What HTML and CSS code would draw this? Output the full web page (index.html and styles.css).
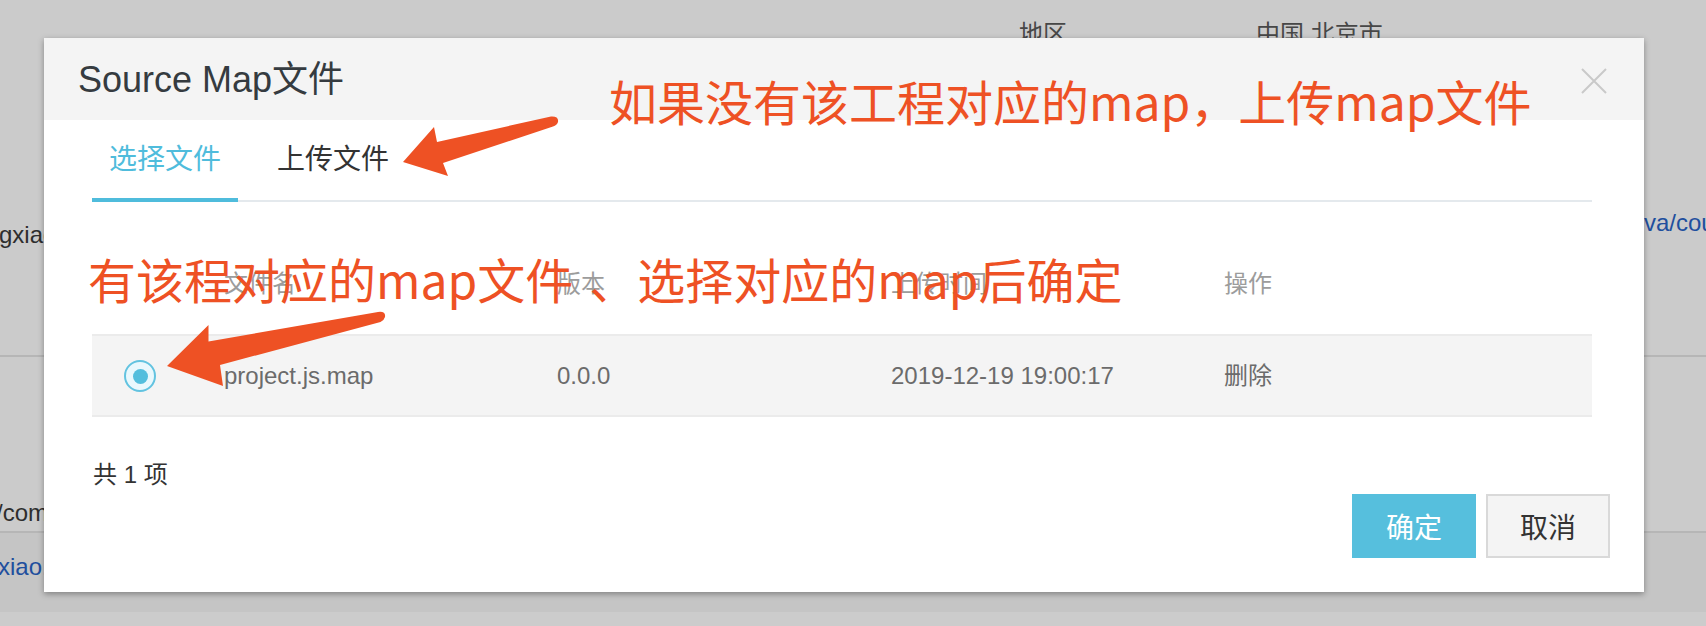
FILE: index.html
```html
<!DOCTYPE html>
<html lang="zh-CN">
<head>
<meta charset="utf-8">
<title>Source Map文件</title>
<link rel="stylesheet" href="styles.css">
</head>
<body>
<div class="page">
  <div class="bg-row bg-row-1">
    <div class="kv">
      <span class="kv-key">地区</span>
      <span class="kv-val">中国 北京市</span>
    </div>
    <div class="bg-cells">
      <span class="bg-cell-left"><span class="bg-text cut-left">gxiao</span></span>
      <span class="bg-link">va/course</span>
    </div>
  </div>
  <div class="bg-row bg-row-2">
    <span class="bg-text cut-left2">/com</span>
  </div>
  <div class="bg-row bg-row-3">
    <span class="bg-link cut-left3">xiao.com</span>
  </div>
  <div class="bg-row bg-row-4"></div>

  <div class="modal">
    <div class="modal-header">
      <h2 class="modal-title">Source Map文件</h2>
      <button class="close" aria-label="关闭">
        <svg width="26" height="26" viewBox="0 0 26 26"><path d="M1 1 L25 25 M25 1 L1 25" stroke="#c9c9c9" stroke-width="2" fill="none"/></svg>
      </button>
    </div>
    <div class="modal-body">
      <div class="tabs">
        <div class="tab active">选择文件</div>
        <div class="tab">上传文件</div>
      </div>
      <div class="table">
        <div class="row thead">
          <div class="cell cell-sel"></div>
          <div class="cell">文件名</div>
          <div class="cell">版本</div>
          <div class="cell">上传时间</div>
          <div class="cell">操作</div>
        </div>
        <div class="row tbody selected">
          <div class="cell cell-sel"><span class="radio"><span class="radio-dot"></span></span></div>
          <div class="cell">project.js.map</div>
          <div class="cell">0.0.0</div>
          <div class="cell">2019-12-19 19:00:17</div>
          <div class="cell">删除</div>
        </div>
      </div>
      <div class="total">共 1 项</div>
    </div>
    <div class="modal-footer">
      <button class="btn btn-primary">确定</button>
      <button class="btn btn-default">取消</button>
    </div>
  </div>

  <div class="annotations">
    <svg class="arrows" width="1706" height="626" viewBox="0 0 1706 626">
      <path fill="#ee5124" d="M403 162 L434 127 L437 142 L551 116.5 Q559 116 558 122 Q557 125 553 126.5 L443 163 L448 176 Z"/>
      <path fill="#ee5124" d="M167 366 L208.5 325 L208.5 341.5 L378 312 Q386 311 385 317 Q384 320.5 380.5 322 L220 365 L223 386 Z"/>
    </svg>
    <div class="note note-1">如果没有该工程对应的map，上传map文件</div>
    <div class="note note-2">有该程对应的map文件<span class="note-gap">、</span>选择对应的map后确定</div>
  </div>
</div>
</body>
</html>
```

FILE: styles.css
```css
* { box-sizing: border-box; }

html, body {
  margin: 0;
  padding: 0;
}

body {
  width: 1706px;
  height: 626px;
  overflow: hidden;
  background: #cbcbcb;
  font-family: "Liberation Sans", "Noto Sans CJK SC", sans-serif;
}

.page {
  position: relative;
  width: 1706px;
  height: 626px;
  overflow: hidden;
}

/* ---------- dimmed page behind the dialog ---------- */
.bg-row {
  font-size: 24px;
  line-height: 32px;
  color: #2e2e2e;
}

.bg-row-1 {
  height: 357px;
  border-bottom: 2px solid #b6b6b6;
  padding-top: 18px;
}

.kv {
  display: flex;
  padding-left: 1019px;
  color: #474747;
}

.kv-val {
  margin-left: 189px;
}

.bg-cells {
  display: flex;
  align-items: flex-start;
  margin-top: 157px;
  white-space: nowrap;
}

.bg-cell-left {
  flex: 0 0 1644px;
  overflow: hidden;
}

.bg-text { color: #2e2e2e; }
.bg-link { color: #1f4f9e; }

.cut-left { display: inline-block; margin-top: 12px; margin-left: -1px; }

.bg-row-2 {
  height: 176px;
  border-bottom: 2px solid #b6b6b6;
  padding-top: 140px;
}

.cut-left2 { margin-left: -4px; }

.bg-row-3 {
  height: 79px;
  background: #c5c5c5;
  padding-top: 18px;
}

.cut-left3 { margin-left: -2px; }

.bg-row-4 {
  height: 14px;
  background: #cccccc;
}

/* ---------- dialog ---------- */
.modal {
  position: absolute;
  left: 44px;
  top: 38px;
  width: 1600px;
  height: 554px;
  background: #ffffff;
  box-shadow: 0 2px 6px rgba(0, 0, 0, 0.35);
  display: flex;
  flex-direction: column;
}

.modal-header {
  height: 82px;
  background: #f4f4f4;
  display: flex;
  align-items: center;
  justify-content: space-between;
  padding: 0 37px 0 34px;
}

.modal-title {
  margin: 0;
  font-size: 36px;
  font-weight: normal;
  line-height: 82px;
  color: #353b40;
  padding-top: 2px;
}

.close {
  border: 0;
  background: none;
  padding: 0;
  width: 26px;
  height: 26px;
  margin-top: 4px;
  display: block;
}

.close svg { display: block; }

.modal-body {
  padding: 0 52px 0 48px;
}

.tabs {
  display: flex;
  gap: 22px;
  border-bottom: 2px solid #e4e9ed;
}

.tab {
  font-size: 28px;
  line-height: 32px;
  padding: 24px 17px 22px;
  color: #333333;
  border-bottom: 4px solid transparent;
  margin-bottom: -2px;
}

.tab.active {
  color: #4fbcdc;
  border-bottom-color: #4fbcdc;
}

.table {
  margin-top: 48px;
}

.row {
  display: grid;
  grid-template-columns: 132px 333px 334px 333px 1fr;
  font-size: 24px;
  line-height: 32px;
}

.thead {
  color: #9c9c9c;
}

.thead .cell {
  padding: 18px 0 34px;
}

.tbody {
  color: #6b6b6b;
  background: #f4f4f4;
  border-top: 2px solid #ebebeb;
  border-bottom: 2px solid #ebebeb;
}

.tbody .cell {
  padding: 24px 0 23px;
}

.cell-sel {
  padding-left: 32px !important;
  display: flex;
  align-items: center;
}

.radio {
  width: 32px;
  height: 32px;
  border-radius: 50%;
  border: 2px solid #62c3e0;
  background: #e9f8fd;
  display: flex;
  align-items: center;
  justify-content: center;
}

.radio-dot {
  width: 15px;
  height: 15px;
  border-radius: 50%;
  background: #53bedd;
}

.total {
  margin-top: 42px;
  font-size: 24px;
  line-height: 32px;
  color: #333333;
  padding-left: 1px;
}

.modal-footer {
  display: flex;
  justify-content: flex-end;
  gap: 10px;
  padding: 3px 34px 34px 0;
}

.btn {
  width: 124px;
  height: 64px;
  font-family: "Liberation Sans", "Noto Sans CJK SC", sans-serif;
  font-size: 28px;
  padding: 0;
  border: 0;
}

.btn-primary {
  background: #56bfdd;
  color: #ffffff;
}

.btn-default {
  background: #f4f4f4;
  border: 2px solid #d9d9d9;
  color: #333333;
}

/* ---------- screenshot annotations ---------- */
.annotations {
  position: absolute;
  left: 0;
  top: 0;
  width: 1706px;
  height: 626px;
  pointer-events: none;
}

.arrows {
  position: absolute;
  left: 0;
  top: 0;
}

.note {
  position: absolute;
  font-family: "Noto Sans CJK SC", sans-serif;
  font-size: 48px;
  line-height: 48px;
  color: #ee5124;
  white-space: nowrap;
}

.note-1 {
  left: 609px;
  top: 76px;
}

.note-2 {
  left: 88px;
  top: 254px;
}

.note-gap {
  margin-left: 16px;
}
```
